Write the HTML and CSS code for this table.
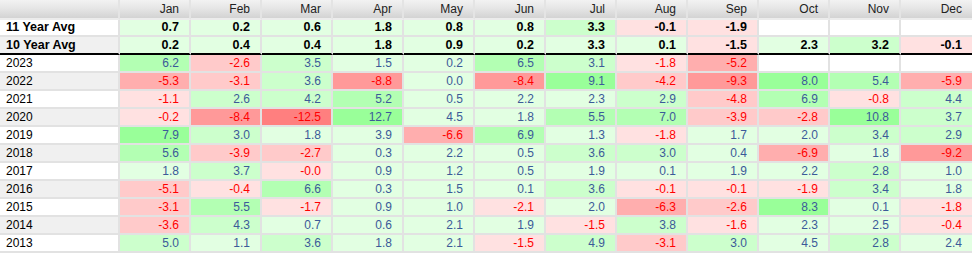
FILE: index.html
```
<!DOCTYPE html>
<html><head>
<title>Monthly returns</title>
<link rel="stylesheet" href="styles.css">
</head><body>
<table class="grid">
<colgroup><col class="lbl"></colgroup>
<thead>
<tr><th></th><th>Jan</th><th>Feb</th><th>Mar</th><th>Apr</th><th>May</th><th>Jun</th><th>Jul</th><th>Aug</th><th>Sep</th><th>Oct</th><th>Nov</th><th>Dec</th></tr>
</thead>
<tbody>
<tr class="avg"><td class="name">11 Year Avg</td><td class="g1">0.7</td><td class="g1">0.2</td><td class="g1">0.6</td><td class="g1">1.8</td><td class="g1">0.8</td><td class="g1">0.8</td><td class="g2">3.3</td><td class="r1">-0.1</td><td class="r1">-1.9</td><td></td><td></td><td></td></tr>
<tr class="avg alt last"><td class="name">10 Year Avg</td><td class="g1">0.2</td><td class="g1">0.4</td><td class="g1">0.4</td><td class="g1">1.8</td><td class="g1">0.9</td><td class="g1">0.2</td><td class="g1">3.3</td><td class="g1">0.1</td><td class="r1">-1.5</td><td class="g1">2.3</td><td class="g2">3.2</td><td class="r1">-0.1</td></tr>
<tr><td class="name">2023</td><td class="g3">6.2</td><td class="r2">-2.6</td><td class="g2">3.5</td><td class="g1">1.5</td><td class="g1">0.2</td><td class="g3">6.5</td><td class="g2">3.1</td><td class="r1">-1.8</td><td class="r3">-5.2</td><td></td><td></td><td></td></tr>
<tr class="alt"><td class="name">2022</td><td class="r3">-5.3</td><td class="r2">-3.1</td><td class="g2">3.6</td><td class="r4">-8.8</td><td class="g1">0.0</td><td class="r4">-8.4</td><td class="g4">9.1</td><td class="r2">-4.2</td><td class="r4">-9.3</td><td class="g4">8.0</td><td class="g3">5.4</td><td class="r3">-5.9</td></tr>
<tr><td class="name">2021</td><td class="r1">-1.1</td><td class="g2">2.6</td><td class="g2">4.2</td><td class="g3">5.2</td><td class="g1">0.5</td><td class="g1">2.2</td><td class="g1">2.3</td><td class="g2">2.9</td><td class="r2">-4.8</td><td class="g3">6.9</td><td class="r1">-0.8</td><td class="g2">4.4</td></tr>
<tr class="alt"><td class="name">2020</td><td class="r1">-0.2</td><td class="r4">-8.4</td><td class="r5">-12.5</td><td class="g4">12.7</td><td class="g1">4.5</td><td class="g1">1.8</td><td class="g3">5.5</td><td class="g3">7.0</td><td class="r2">-3.9</td><td class="r2">-2.8</td><td class="g4">10.8</td><td class="g2">3.7</td></tr>
<tr><td class="name">2019</td><td class="g4">7.9</td><td class="g2">3.0</td><td class="g1">1.8</td><td class="g1">3.9</td><td class="r3">-6.6</td><td class="g3">6.9</td><td class="g1">1.3</td><td class="r1">-1.8</td><td class="g1">1.7</td><td class="g1">2.0</td><td class="g2">3.4</td><td class="g2">2.9</td></tr>
<tr class="alt"><td class="name">2018</td><td class="g3">5.6</td><td class="r2">-3.9</td><td class="r2">-2.7</td><td class="g1">0.3</td><td class="g1">2.2</td><td class="g1">0.5</td><td class="g2">3.6</td><td class="g2">3.0</td><td class="g1">0.4</td><td class="r3">-6.9</td><td class="g1">1.8</td><td class="r4">-9.2</td></tr>
<tr><td class="name">2017</td><td class="g1">1.8</td><td class="g2">3.7</td><td class="r1">-0.0</td><td class="g1">0.9</td><td class="g1">1.2</td><td class="g1">0.5</td><td class="g1">1.9</td><td class="g1">0.1</td><td class="g1">1.9</td><td class="g1">2.2</td><td class="g2">2.8</td><td class="g1">1.0</td></tr>
<tr class="alt"><td class="name">2016</td><td class="r2">-5.1</td><td class="r1">-0.4</td><td class="g3">6.6</td><td class="g1">0.3</td><td class="g1">1.5</td><td class="g1">0.1</td><td class="g2">3.6</td><td class="r1">-0.1</td><td class="r1">-0.1</td><td class="r1">-1.9</td><td class="g2">3.4</td><td class="g1">1.8</td></tr>
<tr><td class="name">2015</td><td class="r2">-3.1</td><td class="g3">5.5</td><td class="r1">-1.7</td><td class="g1">0.9</td><td class="g1">1.0</td><td class="r1">-2.1</td><td class="g1">2.0</td><td class="r3">-6.3</td><td class="r2">-2.6</td><td class="g4">8.3</td><td class="g1">0.1</td><td class="r1">-1.8</td></tr>
<tr class="alt"><td class="name">2014</td><td class="r2">-3.6</td><td class="g2">4.3</td><td class="g1">0.7</td><td class="g1">0.6</td><td class="g1">2.1</td><td class="g1">1.9</td><td class="r1">-1.5</td><td class="g2">3.8</td><td class="r1">-1.6</td><td class="g1">2.3</td><td class="g1">2.5</td><td class="r1">-0.4</td></tr>
<tr><td class="name">2013</td><td class="g2">5.0</td><td class="g1">1.1</td><td class="g2">3.6</td><td class="g1">1.8</td><td class="g1">2.1</td><td class="r1">-1.5</td><td class="g2">4.9</td><td class="r2">-3.1</td><td class="g2">3.0</td><td class="g1">4.5</td><td class="g2">2.8</td><td class="g1">2.4</td></tr>
</tbody>
</table>
</body></html>
```
FILE: styles.css
```
body { margin: 0; background: #fff; }

.grid {
  width: 972px;
  table-layout: fixed;
  border-collapse: separate;
  border-spacing: 0;
  font-family: "Liberation Sans", Arial, sans-serif;
  font-size: 12px;
}
.grid col.lbl { width: 120px; }

.grid th {
  height: 18px; padding: 0 10px 0 0;
  line-height: 18px;
  text-align: right; font-weight: normal; color: #222;
  background: linear-gradient(#f2f2f2, #e6e6e6 45%, #d3d3d3);
  border-bottom: 2px solid #ececec;
  border-right: 2px solid #e4e4e4;
}
.grid th:last-child { border-right: 0; }

.grid td {
  height: 16px; padding: 0 10px 0 0;
  line-height: 16px;
  text-align: right; color: #3b5a99;
  background: #fff;
  border-right: 2px solid #e2e2e2;
  border-bottom: 2px solid #e2e2e2;
  white-space: nowrap; overflow: hidden;
}
.grid td:last-child { border-right: 0; }

.grid td.name { text-align: left; padding: 0 0 0 6px; color: #000; }
.grid tr.alt td.name { background: #f0f0f0; }

/* average rows */
.grid tr.avg td { height: 15px; line-height: 15px; font-weight: bold; font-size: 12.5px; color: #000; }
.grid tr.avg td.name { font-size: 12.5px; }
.grid tr.last td { height: 16px; border-bottom: 2px solid #000; }

/* heat colours */
.g1 { background: #e2ffe2 !important; }
.g2 { background: #ccffcc !important; }
.g3 { background: #b3ffb3 !important; }
.g4 { background: #99ff99 !important; }
.r1 { background: #ffe1e1 !important; }
.r2 { background: #ffcaca !important; }
.r3 { background: #ffaeae !important; }
.r4 { background: #ff9999 !important; }
.r5 { background: #ff7f7f !important; }

.grid td.r1, .grid td.r2, .grid td.r3, .grid td.r4, .grid td.r5 { color: #ff0000; font-weight: normal; }
```
